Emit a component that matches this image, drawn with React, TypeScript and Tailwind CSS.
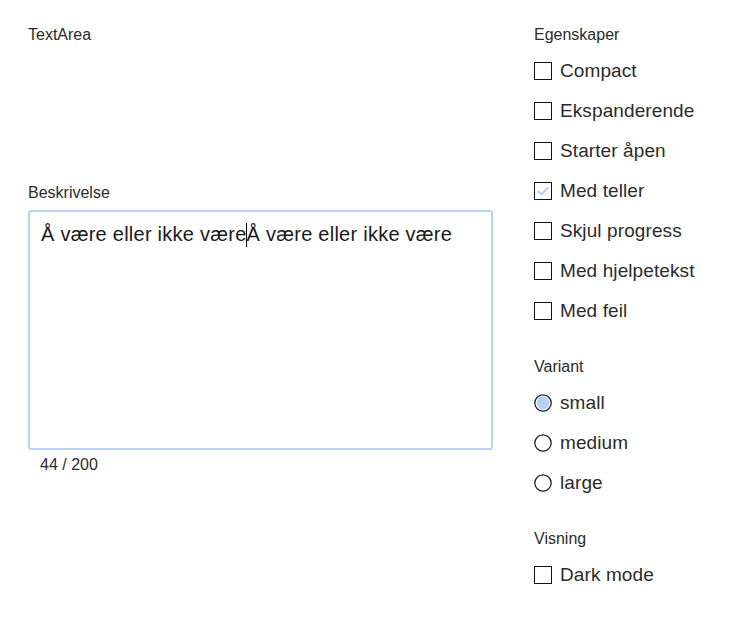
import React from "react";

const font = { fontFamily: '"Liberation Sans", Arial, sans-serif' };

function Box({ checked = false }: { checked?: boolean }) {
  return (
    <span className="flex h-[18px] w-[18px] shrink-0 items-center justify-center border-[1.5px] border-[#111] bg-white">
      {checked && (
        <svg width="12" height="10" viewBox="0 0 12 10">
          <path d="M1.5 5.5 L4.5 8.3 L10.5 1.8" fill="none" stroke="#a9c9f5" strokeWidth="1.8" strokeLinecap="round" strokeLinejoin="round" />
        </svg>
      )}
    </span>
  );
}

function Radio({ checked = false }: { checked?: boolean }) {
  return (
    <svg width="18" height="18" viewBox="0 0 18 18" className="shrink-0">
      <circle cx="9" cy="9" r="8.2" fill="white" stroke="#222" strokeWidth="1.3" />
      {checked && <circle cx="9" cy="9" r="6.4" fill="#b2d1fb" />}
    </svg>
  );
}

function CheckRow({ label, checked }: { label: string; checked?: boolean }) {
  return (
    <div className="flex h-[28px] items-center gap-[8px]">
      <Box checked={checked} />
      <span className="text-[19px] leading-[28px] tracking-[0.1px] text-[#2b2b2b]">{label}</span>
    </div>
  );
}

function RadioRow({ label, checked }: { label: string; checked?: boolean }) {
  return (
    <div className="flex h-[28px] items-center gap-[8px]">
      <Radio checked={checked} />
      <span className="text-[19px] leading-[28px] tracking-[0.1px] text-[#2b2b2b]">{label}</span>
    </div>
  );
}

export default function App() {
  return (
    <div className="min-h-[632px] w-[750px] bg-white pl-[28px] pt-[23px]" style={font}>
      <div className="flex gap-[41px]">
        <div className="w-[465px] flex flex-col">
          <div className="text-[16px] leading-[24px] text-[#2b2b2b]">TextArea</div>
          <div className="mt-[134px] text-[16px] leading-[24px] text-[#2b2b2b]">Beskrivelse</div>
          <div className="mt-[5px] h-[240px] rounded-[3px] border-2 border-[#b5d3fb] px-[11px] pt-[10px]">
            <div className="text-[20px] leading-[24px] tracking-[0.25px] text-[#1a1a1a]">
              Å være eller ikke være<span className="relative inline-block h-[24px] w-0 align-top"><span className="absolute left-[-1px] top-[1px] h-[24px] w-[1px] bg-black" /></span>Å være eller ikke være
            </div>
          </div>
          <div className="mt-[3px] pl-[12px] text-[16px] leading-[24px] text-[#2b2b2b]">44 / 200</div>
        </div>
        <div className="flex flex-col">
          <div className="text-[16px] leading-[24px] text-[#2b2b2b]">Egenskaper</div>
          <div className="mt-[10px] flex flex-col gap-[12px]">
            <CheckRow label="Compact" />
            <CheckRow label="Ekspanderende" />
            <CheckRow label="Starter åpen" />
            <CheckRow label="Med teller" checked />
            <CheckRow label="Skjul progress" />
            <CheckRow label="Med hjelpetekst" />
            <CheckRow label="Med feil" />
          </div>
          <div className="mt-[30px] text-[16px] leading-[24px] text-[#2b2b2b]">Variant</div>
          <div className="mt-[10px] flex flex-col gap-[12px]">
            <RadioRow label="small" checked />
            <RadioRow label="medium" />
            <RadioRow label="large" />
          </div>
          <div className="mt-[30px] text-[16px] leading-[24px] text-[#2b2b2b]">Visning</div>
          <div className="mt-[10px] flex flex-col gap-[12px]">
            <CheckRow label="Dark mode" />
          </div>
        </div>
      </div>
    </div>
  );
}
